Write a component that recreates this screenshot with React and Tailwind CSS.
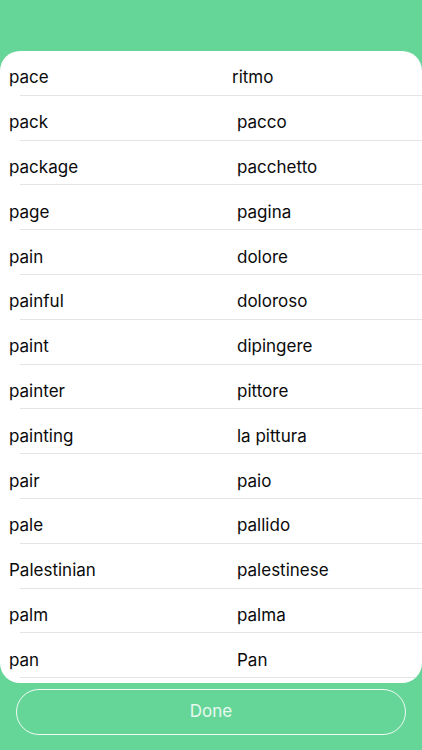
import React from "react";

const rows = [
  ["pace", "ritmo", true],
  ["pack", "pacco"],
  ["package", "pacchetto"],
  ["page", "pagina"],
  ["pain", "dolore"],
  ["painful", "doloroso"],
  ["paint", "dipingere"],
  ["painter", "pittore"],
  ["painting", "la pittura"],
  ["pair", "paio"],
  ["pale", "pallido"],
  ["Palestinian", "palestinese"],
  ["palm", "palma"],
  ["pan", "Pan"],
];

export default function App() {
  return (
    <div
      className="w-[422px] h-[750px] bg-[#66d598] flex flex-col overflow-hidden"
      style={{ fontFamily: "Inter, 'Liberation Sans', sans-serif" }}
    >
      <div className="h-[51px] shrink-0" />
      <div className="h-[632px] bg-white rounded-[20px] overflow-hidden shrink-0 flex flex-col">
        {rows.map(([a, b, first]) => (
          <div key={a} className="h-[44.8px] shrink-0 flex flex-col">
            <div className="flex-1 flex items-center text-[17px] text-[#0a0a0a] leading-none pt-[10px]">
              <span className="w-[232px] pl-[9px] shrink-0">{a}</span>
              <span className={first ? "" : "pl-[5px]"}>{b}</span>
            </div>
            <div className="ml-[20px] h-px bg-[#e4e4e6]" />
          </div>
        ))}
      </div>
      <div className="px-[16px] pt-[6px]">
        <div className="h-[46px] rounded-full border border-white/90 flex items-center justify-center text-[17px] text-white/85">
          Done
        </div>
      </div>
    </div>
  );
}
